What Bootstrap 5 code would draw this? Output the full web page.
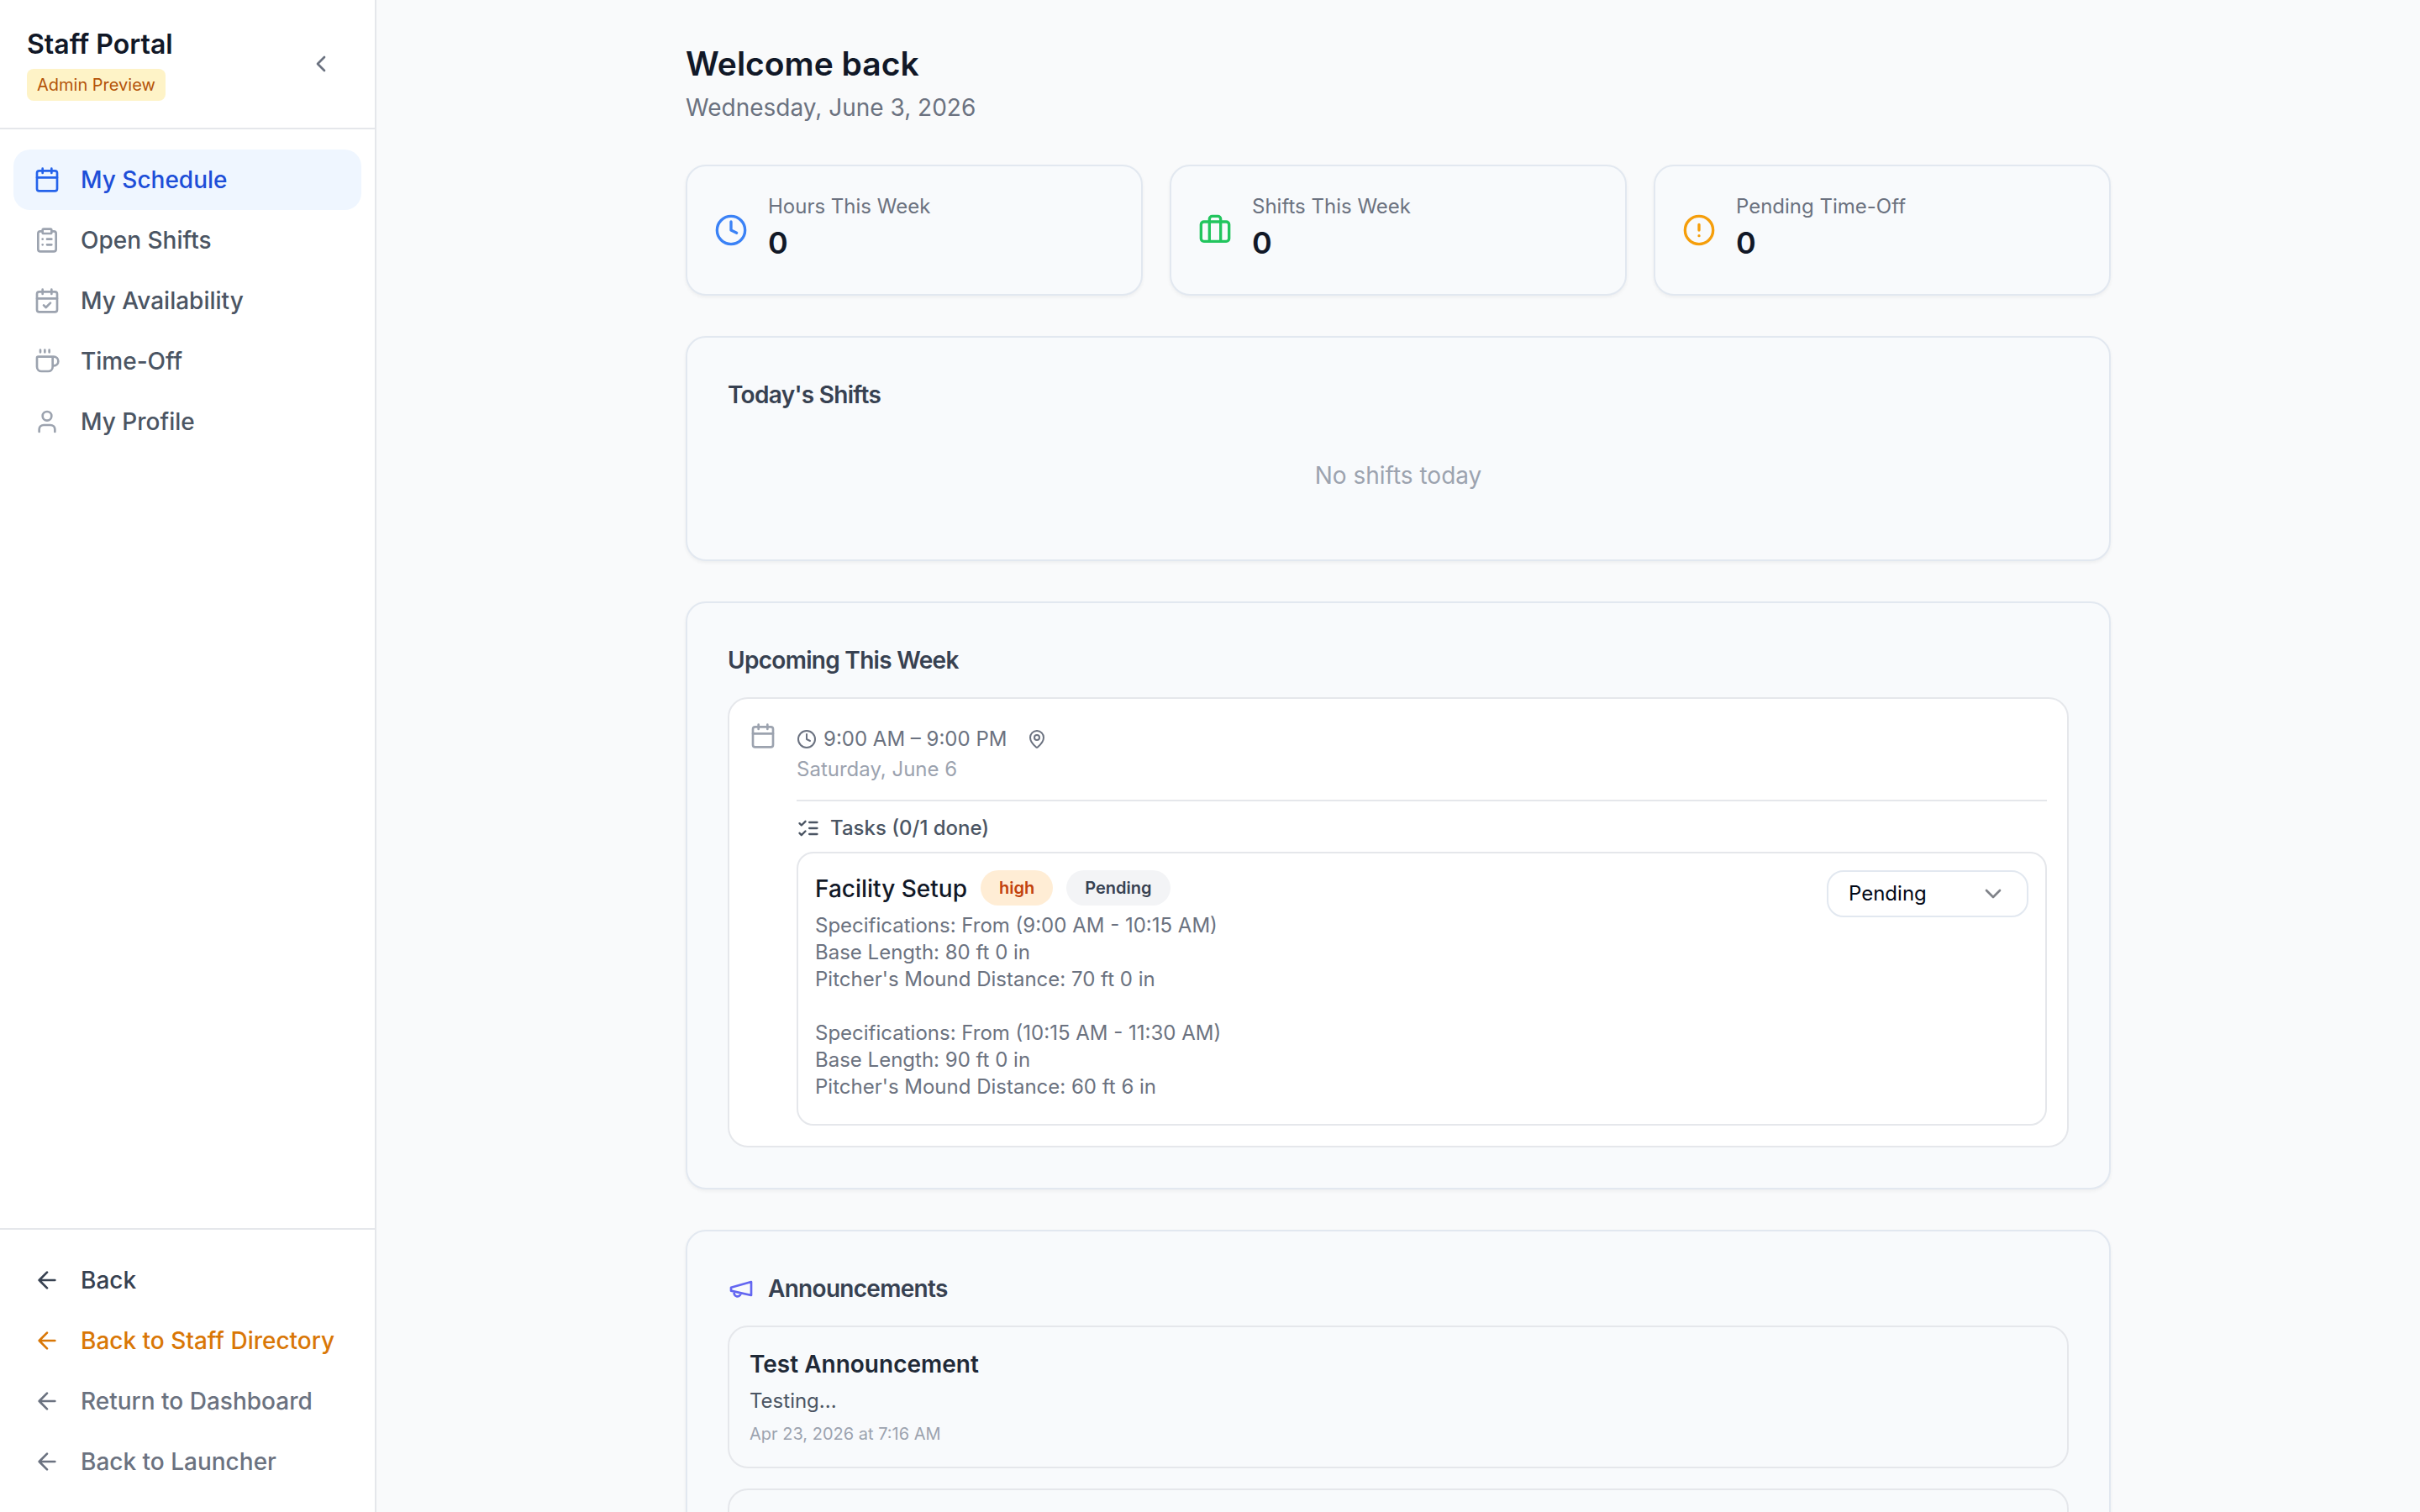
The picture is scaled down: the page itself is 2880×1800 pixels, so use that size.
<!DOCTYPE html>
<html lang="en">
<head>
<meta charset="utf-8">
<meta name="viewport" content="width=device-width, initial-scale=1">
<title>Staff Portal</title>
<link href="https://cdn.jsdelivr.net/npm/bootstrap@5.3.0/dist/css/bootstrap.min.css" rel="stylesheet">
<style>
  :root {
    --line: #e5e7eb;
    --line-cool: #e2e8f0;
    --ink: #111827;
    --muted: #6b7280;
    --faint: #9ca3af;
  }
  body { font-family: Inter, "Liberation Sans", sans-serif; font-size: 28px; line-height: 40px; color: var(--ink); background: #f9fafb; }
  h1, h2, h3, p { margin: 0; }
  svg { flex: none; fill: none; stroke: currentColor; stroke-width: 2; stroke-linecap: round; stroke-linejoin: round; }
  .ico-24 { width: 24px; height: 24px; }
  .ico-28 { width: 28px; height: 28px; }
  .ico-32 { width: 32px; height: 32px; }
  .ico-40 { width: 40px; height: 40px; }
  .ico-blue { color: #3b82f6; }
  .ico-green { color: #22c55e; }
  .ico-amber { color: #f59e0b; }
  .ico-indigo { color: #6366f1; }
  .text-24 { font-size: 24px; line-height: 32px; }
  .text-20 { font-size: 20px; line-height: 30px; }
  .weight-500 { font-weight: 500; }
  .muted { color: var(--muted); }
  .faint { color: var(--faint); }
  .slate { color: #4b5563; }

  .side-panel { width: 448px; background: #fff; border-right: 2px solid var(--line); }
  .side-head { padding: 32px; border-bottom: 2px solid var(--line); }
  .side-title { font-size: 32px; line-height: 42px; font-weight: 600; }
  .preview-tag { padding: 4px 12px; border-radius: 8px; background: #fef3c7; color: #b45309; margin-top: 8px; }
  .collapse-btn { width: 64px; height: 64px; color: var(--muted); background: none; border: 0; }
  .side-list { padding: 24px 16px; }
  .side-foot { border-top: 2px solid var(--line); }
  .side-link { display: flex; align-items: center; gap: 24px; padding: 16px 24px; border-radius: 20px; font-weight: 500; color: #4b5563; text-decoration: none; }
  .side-link svg { color: var(--faint); }
  .side-link.current { background: #eff6ff; color: #1d4ed8; }
  .side-link.current svg { color: #2563eb; }
  .side-foot .side-link { color: var(--muted); }
  .side-foot .side-link svg { color: inherit; }
  .side-foot .link-charcoal { color: #374151; }
  .side-foot .link-amber { color: #d97706; }

  .page-wrap { max-width: 1792px; padding: 48px; }
  .page-title { font-size: 39px; line-height: 56px; font-weight: 600; }
  .panel { background: #f8fafc; border: 2px solid var(--line-cool); border-radius: 24px; box-shadow: 0 2px 4px rgba(0, 0, 0, .05); }
  .panel-lg { padding: 48px; }
  .stat-row { --bs-gutter-x: 32px; }
  .stat { padding: 32px; gap: 24px; }
  .stat-value { font-size: 36px; line-height: 54px; font-weight: 600; padding-bottom: 2px; }
  .panel-title { font-size: 28px; line-height: 40px; font-weight: 600; color: #374151; letter-spacing: -0.025em; }
  .sections { gap: 48px; }
  .stack-24 { gap: 24px; }
  .stack-16 { gap: 16px; }
  .stack-12 { gap: 12px; }
  .empty-note { padding: 32px 0; }
  .item-box { border: 2px solid var(--line); border-radius: 24px; padding: 24px; min-height: 170px; }
  .shift-body { border-top: 2px solid var(--line); margin-top: 20px; padding-top: 16px; }
  .task-box { border: 2px solid var(--line); border-radius: 20px; padding: 20px 20px 28px; margin-top: 12px; }
  .task-name { font-size: 28px; line-height: 40px; font-weight: 500; padding-top: 2px; }
  .pill { padding: 6px 22px; border-radius: 21px; font-size: 20px; line-height: 30px; font-weight: 600; }
  .pill-high { background: #ffedd5; color: #c2410c; }
  .pill-wait { background: #f3f4f6; color: #374151; }
  .status-pick { width: 240px; height: 56px; padding: 0 24px; border: 2px solid var(--line-cool); border-radius: 20px; font-size: 24px; line-height: 32px; color: #020817; appearance: none;
    background: #fff url("data:image/svg+xml,%3Csvg xmlns='http://www.w3.org/2000/svg' viewBox='0 0 24 24' fill='none' stroke='%23808389' stroke-width='2' stroke-linecap='round' stroke-linejoin='round'%3E%3Cpath d='m6 9 6 6 6-6'/%3E%3C/svg%3E") no-repeat right 24px center / 32px 32px; }
  .news-title { font-size: 28px; line-height: 40px; font-weight: 600; color: #1f2937; }
</style>
</head>
<body>
<div class="d-flex vh-100 overflow-hidden">
  <aside class="side-panel d-flex flex-column flex-shrink-0">
    <div class="side-head d-flex align-items-center justify-content-between">
      <div class="d-flex flex-column align-items-start">
        <div class="side-title">Staff Portal</div>
        <span class="preview-tag text-20">Admin Preview</span>
      </div>
      <button type="button" class="collapse-btn d-flex align-items-center justify-content-center p-0" aria-label="Collapse sidebar">
        <svg class="ico-32" viewBox="0 0 24 24"><path d="m15 18-6-6 6-6"/></svg>
      </button>
    </div>
    <nav class="side-list flex-grow-1">
      <a class="side-link current" href="#"><svg class="ico-32" viewBox="0 0 24 24"><path d="M8 2v4M16 2v4M3 10h18"/><rect x="3" y="4" width="18" height="18" rx="2"/></svg>My Schedule</a>
      <a class="side-link" href="#"><svg class="ico-32" viewBox="0 0 24 24"><rect x="8" y="2" width="8" height="4" rx="1"/><path d="M16 4h2a2 2 0 0 1 2 2v14a2 2 0 0 1-2 2H6a2 2 0 0 1-2-2V6a2 2 0 0 1 2-2h2M12 11h4M12 16h4M8 11h.01M8 16h.01"/></svg>Open Shifts</a>
      <a class="side-link" href="#"><svg class="ico-32" viewBox="0 0 24 24"><path d="M8 2v4M16 2v4M3 10h18M9 16l2 2 4-4"/><rect x="3" y="4" width="18" height="18" rx="2"/></svg>My Availability</a>
      <a class="side-link" href="#"><svg class="ico-32" viewBox="0 0 24 24"><path d="M10 2v2M14 2v2M6 2v2M16 8a1 1 0 0 1 1 1v8a4 4 0 0 1-4 4H7a4 4 0 0 1-4-4V9a1 1 0 0 1 1-1h14a4 4 0 1 1 0 8h-1"/></svg>Time-Off</a>
      <a class="side-link" href="#"><svg class="ico-32" viewBox="0 0 24 24"><path d="M19 21v-2a4 4 0 0 0-4-4H9a4 4 0 0 0-4 4v2"/><circle cx="12" cy="7" r="4"/></svg>My Profile</a>
    </nav>
    <div class="side-list side-foot">
      <a class="side-link link-charcoal" href="#"><svg class="ico-32" viewBox="0 0 24 24"><path d="m12 19-7-7 7-7M19 12H5"/></svg>Back</a>
      <a class="side-link link-amber" href="#"><svg class="ico-32" viewBox="0 0 24 24"><path d="m12 19-7-7 7-7M19 12H5"/></svg>Back to Staff Directory</a>
      <a class="side-link" href="#"><svg class="ico-32" viewBox="0 0 24 24"><path d="m12 19-7-7 7-7M19 12H5"/></svg>Return to Dashboard</a>
      <a class="side-link" href="#"><svg class="ico-32" viewBox="0 0 24 24"><path d="m12 19-7-7 7-7M19 12H5"/></svg>Back to Launcher</a>
    </div>
  </aside>

  <main class="flex-grow-1 overflow-hidden">
    <div class="page-wrap mx-auto d-flex flex-column sections">
      <header>
        <h1 class="page-title">Welcome back</h1>
        <p class="muted mt-1">Wednesday, June 3, 2026</p>
      </header>

      <div class="row row-cols-3 stat-row">
        <div class="col"><div class="panel stat d-flex align-items-center">
          <svg class="ico-40 ico-blue" viewBox="0 0 24 24"><circle cx="12" cy="12" r="10"/><path d="M12 6v6l4 2"/></svg>
          <div><div class="text-24 muted">Hours This Week</div><div class="stat-value">0</div></div>
        </div></div>
        <div class="col"><div class="panel stat d-flex align-items-center">
          <svg class="ico-40 ico-green" viewBox="0 0 24 24"><path d="M16 20V4a2 2 0 0 0-2-2h-4a2 2 0 0 0-2 2v16"/><rect x="2" y="6" width="20" height="14" rx="2"/></svg>
          <div><div class="text-24 muted">Shifts This Week</div><div class="stat-value">0</div></div>
        </div></div>
        <div class="col"><div class="panel stat d-flex align-items-center">
          <svg class="ico-40 ico-amber" viewBox="0 0 24 24"><circle cx="12" cy="12" r="10"/><path d="M12 8v4M12 16h.01"/></svg>
          <div><div class="text-24 muted">Pending Time-Off</div><div class="stat-value">0</div></div>
        </div></div>
      </div>

      <section class="panel panel-lg d-flex flex-column stack-24">
        <h2 class="panel-title">Today's Shifts</h2>
        <p class="empty-note faint text-center">No shifts today</p>
      </section>

      <section class="panel panel-lg d-flex flex-column stack-24">
        <h2 class="panel-title">Upcoming This Week</h2>
        <div class="item-box bg-white d-flex align-items-start stack-24">
          <svg class="ico-32 faint mt-1" viewBox="0 0 24 24"><path d="M8 2v4M16 2v4M3 10h18"/><rect x="3" y="4" width="18" height="18" rx="2"/></svg>
          <div class="flex-grow-1">
            <div class="d-flex align-items-center stack-24 text-24 muted pt-2">
              <span class="d-flex align-items-center gap-2"><svg class="ico-24" viewBox="0 0 24 24"><circle cx="12" cy="12" r="10"/><path d="M12 6v6l4 2"/></svg>9:00 AM – 9:00 PM</span>
              <svg class="ico-24" viewBox="0 0 24 24"><path d="M20 10c0 5-5.500 10.200-7.400 11.800a1 1 0 0 1-1.200 0C9.500 20.200 4 15 4 10a8 8 0 0 1 16 0"/><circle cx="12" cy="10" r="3"/></svg>
            </div>
            <div class="text-24 faint mt-1">Saturday, June 6</div>
            <div class="shift-body">
              <div class="d-flex align-items-center text-24 weight-500 slate stack-12"><svg class="ico-28" viewBox="0 0 24 24"><path d="m3 17 2 2 4-4M3 7l2 2 4-4M13 6h8M13 12h8M13 18h8"/></svg>Tasks (0/1 done)</div>
              <div class="task-box d-flex align-items-start justify-content-between">
                <div>
                  <div class="d-flex align-items-center stack-16">
                    <h3 class="task-name">Facility Setup</h3>
                    <span class="pill pill-high">high</span>
                    <span class="pill pill-wait">Pending</span>
                  </div>
                  <p class="text-24 muted mt-2">Specifications: From (9:00 AM - 10:15 AM)<br>Base Length: 80 ft 0 in<br>Pitcher's Mound Distance: 70 ft 0 in<br><br>Specifications: From (10:15 AM - 11:30 AM)<br>Base Length: 90 ft 0 in<br>Pitcher's Mound Distance: 60 ft 6 in</p>
                </div>
                <select class="status-pick" aria-label="Task status"><option selected>Pending</option><option>In Progress</option><option>Completed</option></select>
              </div>
            </div>
          </div>
        </div>
      </section>

      <section class="panel panel-lg d-flex flex-column stack-24">
        <h2 class="panel-title d-flex align-items-center stack-16"><svg class="ico-32 ico-indigo" viewBox="0 0 24 24"><path d="m3 11 18-5v12L3 14v-3zM11.600 16.800a3 3 0 1 1-5.800-1.600"/></svg>Announcements</h2>
        <article class="item-box">
          <h3 class="news-title">Test Announcement</h3>
          <p class="text-24 slate mt-2">Testing...</p>
          <p class="text-20 faint mt-2">Apr 23, 2026 at 7:16 AM</p>
        </article>
        <article class="item-box"></article>
      </section>
    </div>
  </main>
</div>
<script src="https://cdn.jsdelivr.net/npm/bootstrap@5.3.0/dist/js/bootstrap.bundle.min.js"></script>
</body>
</html>
